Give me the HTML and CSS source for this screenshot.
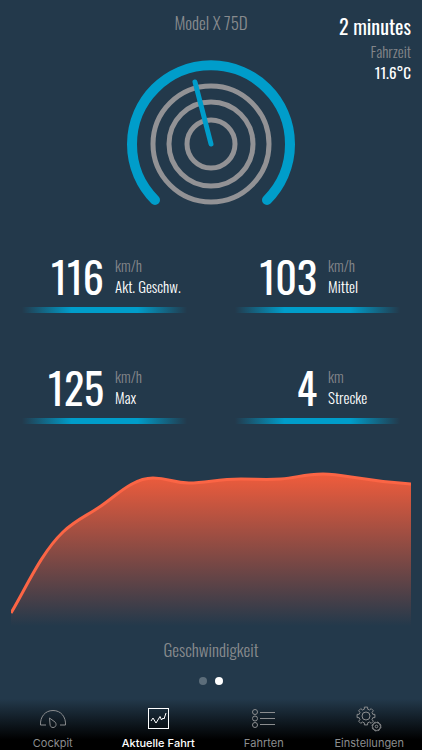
FILE: index.html
```
<!DOCTYPE html>
<html lang="de">
<head>
    <meta charset="UTF-8">
    <meta name="viewport" content="width=device-width, initial-scale=1.0">
    <title>Aktuelle Fahrt</title>
    <link rel="stylesheet" href="styles.css">
</head>
<body>
    <header class="trip-header">
        <div class="vehicle">
            <h1>Model X 75D</h1>
            <svg class="gauge" viewBox="0 0 170 150" aria-hidden="true">
                <path class="gauge-arc" d="M29 141 A79 79 0 1 1 141 141"/>
                <circle class="gauge-ring" cx="85" cy="85" r="58"/>
                <circle class="gauge-ring" cx="85" cy="85" r="42"/>
                <circle class="gauge-ring" cx="85" cy="85" r="24"/>
                <path class="gauge-needle" d="M85 85 L69 23"/>
            </svg>
        </div>
        <div class="trip-info">
            <p class="duration">2 minutes</p>
            <p class="duration-label">Fahrzeit</p>
            <p class="temperature">11.6°C</p>
        </div>
    </header>

    <main>
        <section class="stats">
            <div class="stat">
                <span class="value">116</span>
                <span class="unit">km/h</span>
                <span class="name">Akt. Geschw.</span>
            </div>
            <div class="stat">
                <span class="value">103</span>
                <span class="unit">km/h</span>
                <span class="name">Mittel</span>
            </div>
            <div class="stat">
                <span class="value">125</span>
                <span class="unit">km/h</span>
                <span class="name">Max</span>
            </div>
            <div class="stat">
                <span class="value">4</span>
                <span class="unit">km</span>
                <span class="name">Strecke</span>
            </div>
        </section>

        <section class="chart">
            <svg viewBox="0 0 400 160" aria-hidden="true">
                <defs>
                    <linearGradient id="speed-fill" x1="0" y1="0" x2="0" y2="1">
                        <stop offset="0" stop-color="#f05c3c"/>
                        <stop offset="1" stop-color="#f05c3c" stop-opacity="0"/>
                    </linearGradient>
                </defs>
                <path fill="url(#speed-fill)" d="M0 147 C15 122 30 87 52 66 C66 53 74 51 90 40 C106 29 122 12 142 12 C158 12 162 17 178 17 C196 17 206 13 230 13 C246 13 254 14 270 13 C286 12 292 8 312 8 C334 8 344 14 400 18 V160 H0 Z"/>
                <path class="speed-line" d="M0 147 C15 122 30 87 52 66 C66 53 74 51 90 40 C106 29 122 12 142 12 C158 12 162 17 178 17 C196 17 206 13 230 13 C246 13 254 14 270 13 C286 12 292 8 312 8 C334 8 344 14 400 18"/>
            </svg>
            <h2>Geschwindigkeit</h2>
            <div class="pages">
                <button type="button" class="dot" aria-label="Seite 1"></button>
                <button type="button" class="dot active" aria-label="Seite 2"></button>
            </div>
        </section>
    </main>

    <nav class="tabs">
        <a href="#cockpit">
            <svg viewBox="0 0 28 28" aria-hidden="true">
                <path d="M7 20 H1.500 C1 12 6 5.500 14 5.500 C22 5.500 27 12 26.500 20 H21"/>
                <path d="M10.500 13 L16 17 C18 19 17 22.500 14 22.500 C12 22.500 11 21 11 19 Z"/>
            </svg>
            Cockpit
        </a>
        <a href="#fahrt" class="active">
            <svg viewBox="0 0 28 28" aria-hidden="true">
                <rect x="4.500" y="3.500" width="20" height="20"/>
                <path d="M7 16 L9 13 L12 18 L16 11.500 L17.500 15 L19 13 L20 14 L22 8"/>
            </svg>
            Aktuelle Fahrt
        </a>
        <a href="#fahrten">
            <svg viewBox="0 0 28 28" aria-hidden="true">
                <circle cx="5" cy="7" r="2.500"/>
                <circle cx="5" cy="13.500" r="2.500"/>
                <circle cx="5" cy="20" r="2.500"/>
                <path d="M10 7.500 H25 M10 13.500 H25 M10 19.500 H25"/>
            </svg>
            Fahrten
        </a>
        <a href="#einstellungen">
            <svg viewBox="0 0 28 28" aria-hidden="true">
                <g transform="translate(11 11)">
                    <path d="M8.900 1.600 L6.800 1.700 L6 3.600 L7.400 5.200 L5.200 7.400 L3.600 6 L1.700 6.800 L1.600 8.900 L-1.600 8.900 L-1.700 6.800 L-3.600 6 L-5.200 7.400 L-7.400 5.200 L-6 3.600 L-6.800 1.700 L-8.900 1.600 L-8.900 -1.600 L-6.800 -1.700 L-6 -3.600 L-7.400 -5.200 L-5.200 -7.400 L-3.600 -6 L-1.700 -6.800 L-1.600 -8.900 L1.600 -8.900 L1.700 -6.800 L3.600 -6 L5.200 -7.400 L7.400 -5.200 L6 -3.600 L6.800 -1.700 L8.900 -1.600 Z"/>
                    <circle r="4"/>
                </g>
                <circle cx="21.500" cy="21.500" r="4"/>
                <circle cx="21.500" cy="21.500" r="4.500" stroke-dasharray="2 1.530"/>
                <circle cx="21.500" cy="21.500" r="1.300"/>
            </svg>
            Einstellungen
        </a>
    </nav>
</body>
</html>
```
FILE: styles.css
```
* {
    box-sizing: border-box;
}
body {
    margin: 0;
    min-height: 100vh;
    display: flex;
    flex-direction: column;
    background-color: #23394b;
    font-family: Oswald, "Roboto Condensed", "Liberation Sans", sans-serif;
    font-weight: 300;
    font-kerning: none;
    color: white;
}
h1, h2, p {
    margin: 0;
    font-weight: inherit;
}
.trip-header {
    display: grid;
    grid-template-columns: 1fr 170px 1fr;
    padding: 11px 11px 0;
}
.vehicle {
    grid-column: 2;
    text-align: center;
}
h1, h2 {
    font-size: 17px;
    line-height: 24px;
    color: #888b8e;
}
.gauge {
    display: block;
    width: 170px;
    margin-top: 24px;
    fill: none;
    stroke-linecap: round;
}
.gauge-arc {
    stroke: #009dca;
    stroke-width: 10;
}
.gauge-ring {
    stroke: #929295;
    stroke-width: 5;
}
.gauge-needle {
    stroke: #009dca;
    stroke-width: 5;
}
.trip-info {
    text-align: right;
    font-size: 15px;
    line-height: 21px;
}
.duration {
    font-size: 20px;
    line-height: 30px;
}
.duration, .temperature, .value {
    font-weight: 400;
}
.duration-label, .unit {
    color: #83868a;
}
.stats {
    display: grid;
    grid-template-columns: 1fr 1fr;
    gap: 53px 48px;
    padding: 46px 22px 0;
}
.stat {
    display: grid;
    grid-template-columns: 82px 1fr;
    column-gap: 11px;
    font-size: 15px;
    line-height: 21px;
    white-space: nowrap;
}
.value {
    grid-row: span 2;
    text-align: right;
    font-size: 42px;
    line-height: 42px;
}
.stat::after {
    content: "";
    grid-column: 1 / -1;
    height: 6px;
    margin-top: 10px;
    background: linear-gradient(to right, transparent, #009dca 30%, #009dca 70%, transparent);
}
.chart {
    padding: 42px 11px 0;
    text-align: center;
}
.chart svg {
    display: block;
    width: 100%;
    margin-bottom: 12px;
}
.speed-line {
    fill: none;
    stroke: #fb6545;
    stroke-width: 3;
}
.pages {
    display: flex;
    justify-content: center;
    gap: 8px;
    padding: 15px 0 14px;
}
.dot {
    width: 8px;
    height: 8px;
    padding: 0;
    border: none;
    border-radius: 50%;
    background-color: #5c6d7a;
    cursor: pointer;
}
.dot.active {
    background-color: white;
}
.tabs {
    display: grid;
    grid-template-columns: repeat(4, 1fr);
    margin-top: auto;
    padding-top: 6px;
    background: linear-gradient(#23394b, black 80%);
    font-family: Inter, sans-serif;
    font-size: 11px;
    font-weight: 400;
    line-height: 14px;
}
.tabs a {
    display: flex;
    flex-direction: column;
    align-items: center;
    gap: 3px;
    color: #8b8d8f;
    text-decoration: none;
}
.tabs a.active {
    color: white;
    font-weight: 500;
}
.tabs svg {
    width: 28px;
    height: 28px;
    fill: none;
    stroke: currentColor;
    stroke-width: 1;
}
```
